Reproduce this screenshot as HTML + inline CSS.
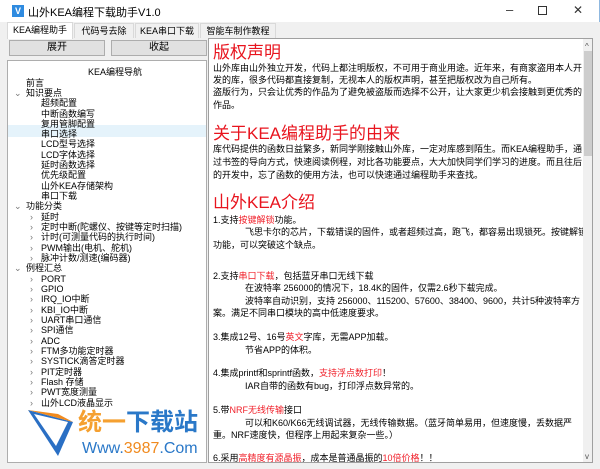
<!DOCTYPE html>
<html><head><meta charset="utf-8"><style>
*{margin:0;padding:0;box-sizing:border-box}
body{width:600px;height:469px;overflow:hidden;background:#f0f0f0;font-family:"Liberation Sans","Noto Sans CJK SC",sans-serif;font-size:11px;color:#000;position:relative}
.a{position:absolute;white-space:nowrap}
.title{position:absolute;left:0;top:0;width:600px;height:22px;background:#fff;border-right:1px solid #8fb8e0}
.tab{position:absolute;top:23px;height:15px;font-size:9px;line-height:15px;text-align:center;border:1px solid #d9d9d9;border-bottom:none;background:#f0f0f0}
.btn{position:absolute;top:40px;height:16px;background:#e1e1e1;border:1px solid #adadad;text-align:center;font-size:10px;line-height:14px}
.tree{position:absolute;left:7px;top:60px;width:200px;height:403px;background:#fff;border:1px solid #adadad;overflow:hidden}
.tree .a{font-size:9px;line-height:10px;margin-top:2px}
.chev{color:#777;font-size:8px}
.right{position:absolute;left:208px;top:38px;width:385px;height:425px;background:#fff;border:1px solid #a0a0a0;overflow:hidden}
.right .a{font-size:9px;line-height:12px}
.h{color:#e8141e;font-size:17px!important;line-height:22px!important}
.r{color:#f01e28}
</style></head><body>
<div class="title">
 <div class="a" style="left:12px;top:5px;width:12px;height:12px;background:#2f8be0;color:#fff;font-size:9px;line-height:12px;text-align:center;font-weight:bold">V</div>
 <div class="a" style="left:28px;top:4px;font-size:11px">山外KEA编程下载助手V1.0</div>
 <div class="a" style="left:506px;top:2px;font-size:13px;color:#333">–</div>
 <div class="a" style="left:538px;top:6px;width:9px;height:9px;border:1px solid #333"></div>
 <div class="a" style="left:573px;top:3px;font-size:12px;color:#333">✕</div>
</div>
<div class="tab" style="left:7px;top:22px;height:17px;width:66px;background:#fff">KEA编程助手</div>
<div class="tab" style="left:74px;width:60px">代码号去除</div>
<div class="tab" style="left:135px;width:64px">KEA串口下载</div>
<div class="tab" style="left:200px;width:76px">智能车制作教程</div>
<div class="btn" style="left:9px;width:96px">展开</div>
<div class="btn" style="left:111px;width:96px">收起</div>
<div class="tree">
 <div class="a" style="left:80px;top:4px">KEA编程导航</div>
 <div class="a" style="left:0;top:64px;width:198px;height:12px;background:#e5f3fb;margin:0"></div>
 <div class="a" style="left:18px;top:15px">前言</div>
 <div class="a chev" style="left:6px;top:25px">⌄</div><div class="a" style="left:18px;top:25px">知识要点</div>
 <div class="a" style="left:33px;top:35px">超频配置</div>
 <div class="a" style="left:33px;top:46px">中断函数编写</div>
 <div class="a" style="left:33px;top:56px">复用管脚配置</div>
 <div class="a" style="left:33px;top:66px">串口选择</div>
 <div class="a" style="left:33px;top:76px">LCD型号选择</div>
 <div class="a" style="left:33px;top:87px">LCD字体选择</div>
 <div class="a" style="left:33px;top:97px">延时函数选择</div>
 <div class="a" style="left:33px;top:107px">优先级配置</div>
 <div class="a" style="left:33px;top:118px">山外KEA存储架构</div>
 <div class="a" style="left:33px;top:128px">串口下载</div>
 <div class="a chev" style="left:6px;top:138px">⌄</div><div class="a" style="left:18px;top:138px">功能分类</div>
 <div class="a chev" style="left:22px;top:149px">›</div><div class="a" style="left:33px;top:149px">延时</div>
 <div class="a chev" style="left:22px;top:159px">›</div><div class="a" style="left:33px;top:159px">定时中断(陀螺仪、按键等定时扫描)</div>
 <div class="a chev" style="left:22px;top:169px">›</div><div class="a" style="left:33px;top:169px">计时(可测量代码的执行时间)</div>
 <div class="a chev" style="left:22px;top:180px">›</div><div class="a" style="left:33px;top:180px">PWM输出(电机、舵机)</div>
 <div class="a chev" style="left:22px;top:190px">›</div><div class="a" style="left:33px;top:190px">脉冲计数/测速(编码器)</div>
 <div class="a chev" style="left:6px;top:200px">⌄</div><div class="a" style="left:18px;top:200px">例程汇总</div>
 <div class="a chev" style="left:22px;top:211px">›</div><div class="a" style="left:33px;top:211px">PORT</div>
 <div class="a chev" style="left:22px;top:221px">›</div><div class="a" style="left:33px;top:221px">GPIO</div>
 <div class="a chev" style="left:22px;top:231px">›</div><div class="a" style="left:33px;top:231px">IRQ_IO中断</div>
 <div class="a chev" style="left:22px;top:242px">›</div><div class="a" style="left:33px;top:242px">KBI_IO中断</div>
 <div class="a chev" style="left:22px;top:252px">›</div><div class="a" style="left:33px;top:252px">UART串口通信</div>
 <div class="a chev" style="left:22px;top:262px">›</div><div class="a" style="left:33px;top:262px">SPI通信</div>
 <div class="a chev" style="left:22px;top:273px">›</div><div class="a" style="left:33px;top:273px">ADC</div>
 <div class="a chev" style="left:22px;top:283px">›</div><div class="a" style="left:33px;top:283px">FTM多功能定时器</div>
 <div class="a chev" style="left:22px;top:293px">›</div><div class="a" style="left:33px;top:293px">SYSTICK滴答定时器</div>
 <div class="a chev" style="left:22px;top:304px">›</div><div class="a" style="left:33px;top:304px">PIT定时器</div>
 <div class="a chev" style="left:22px;top:314px">›</div><div class="a" style="left:33px;top:314px">Flash 存储</div>
 <div class="a chev" style="left:22px;top:324px">›</div><div class="a" style="left:33px;top:324px">PWT宽度测量</div>
 <div class="a chev" style="left:22px;top:335px">›</div><div class="a" style="left:33px;top:335px">山外LCD液晶显示</div>
 <svg class="a" style="left:20px;top:347px;margin:0" width="50" height="50" viewBox="0 0 50 50">
  <polygon points="0,2 45,14 30,48" fill="#2a6fc4"/>
  <polygon points="6,6 40,14 28,38" fill="#fff"/>
  <polygon points="0,2 30,6 45,14" fill="#f08a1e"/>
 </svg>
 <div class="a" style="left:70px;top:348px;font-size:24px;line-height:28px;font-weight:bold;margin:0"><span style="color:#f5a030">统一</span><span style="color:#2a78c8">下载站</span></div>
 <div class="a" style="left:74px;top:379px;font-size:16px;line-height:18px;color:#2a78c8;margin:0">Www.<span style="color:#f08a1e">3987</span>.Com</div>
</div>
<div class="right">
 <div class="a h" style="left:4px;top:3px">版权声明</div>
 <div class="a" style="left:4px;top:23px">山外库由山外独立开发，代码上都注明版权，不可用于商业用途。近年来，有商家盗用本人开</div>
 <div class="a" style="left:4px;top:35px">发的库，很多代码都直接复制，无视本人的版权声明，甚至把版权改为自己所有。</div>
 <div class="a" style="left:4px;top:47px">盗版行为，只会让优秀的作品为了避免被盗版而选择不公开，让大家更少机会接触到更优秀的</div>
 <div class="a" style="left:4px;top:60px">作品。</div>
 <div class="a h" style="left:4px;top:84px">关于KEA编程助手的由来</div>
 <div class="a" style="left:4px;top:104px">库代码提供的函数日益繁多，新同学刚接触山外库，一定对库感到陌生。而KEA编程助手，通</div>
 <div class="a" style="left:4px;top:117px">过书签的导向方式，快速阅读例程，对比各功能要点，大大加快同学们学习的进度。而且往后</div>
 <div class="a" style="left:4px;top:130px">的开发中，忘了函数的使用方法，也可以快速通过编程助手来查找。</div>
 <div class="a h" style="left:4px;top:153px">山外KEA介绍</div>
 <div class="a" style="left:4px;top:175px">1.支持<span class="r">按键解锁</span>功能。</div>
 <div class="a" style="left:36px;top:187px">飞思卡尔的芯片，下载错误的固件，或者超频过高，跑飞，都容易出现锁死。按键解锁</div>
 <div class="a" style="left:4px;top:200px">功能，可以突破这个缺点。</div>
 <div class="a" style="left:4px;top:231px">2.支持<span class="r">串口下载</span>，包括蓝牙串口无线下载</div>
 <div class="a" style="left:36px;top:243px">在波特率 256000的情况下，18.4K的固件，仅需2.6秒下载完成。</div>
 <div class="a" style="left:36px;top:256px">波特率自动识别，支持 256000、115200、57600、38400、9600，共计5种波特率方</div>
 <div class="a" style="left:4px;top:268px">案。满足不同串口模块的高中低速度要求。</div>
 <div class="a" style="left:4px;top:292px">3.集成12号、16号<span class="r">英文</span>字库，无需APP加载。</div>
 <div class="a" style="left:36px;top:305px">节省APP的体积。</div>
 <div class="a" style="left:4px;top:328px">4.集成printf和sprintf函数，<span class="r">支持浮点数打印</span>！</div>
 <div class="a" style="left:36px;top:341px">IAR自带的函数有bug，打印浮点数异常的。</div>
 <div class="a" style="left:4px;top:365px">5.带<span class="r">NRF无线传输</span>接口</div>
 <div class="a" style="left:36px;top:378px">可以和K60/K66无线调试器，无线传输数据。（蓝牙简单易用，但速度慢，丢数据严</div>
 <div class="a" style="left:4px;top:390px">重。NRF速度快，但程序上用起来复杂一些。）</div>
 <div class="a" style="left:4px;top:413px">6.采用<span class="r">高精度有源晶振</span>，成本是普通晶振的<span class="r">10倍价格</span>！！</div>
 <div class="a" style="left:374px;top:0;width:10px;height:424px;background:#f0f0f0"></div>
 <div class="a" style="left:376px;top:2px;font-size:8px;color:#555">^</div>
 <div class="a" style="left:375px;top:12px;width:8px;height:105px;background:#cdcdcd"></div>
 <div class="a" style="left:376px;top:412px;font-size:8px;color:#555">v</div>
</div>
</body></html>
